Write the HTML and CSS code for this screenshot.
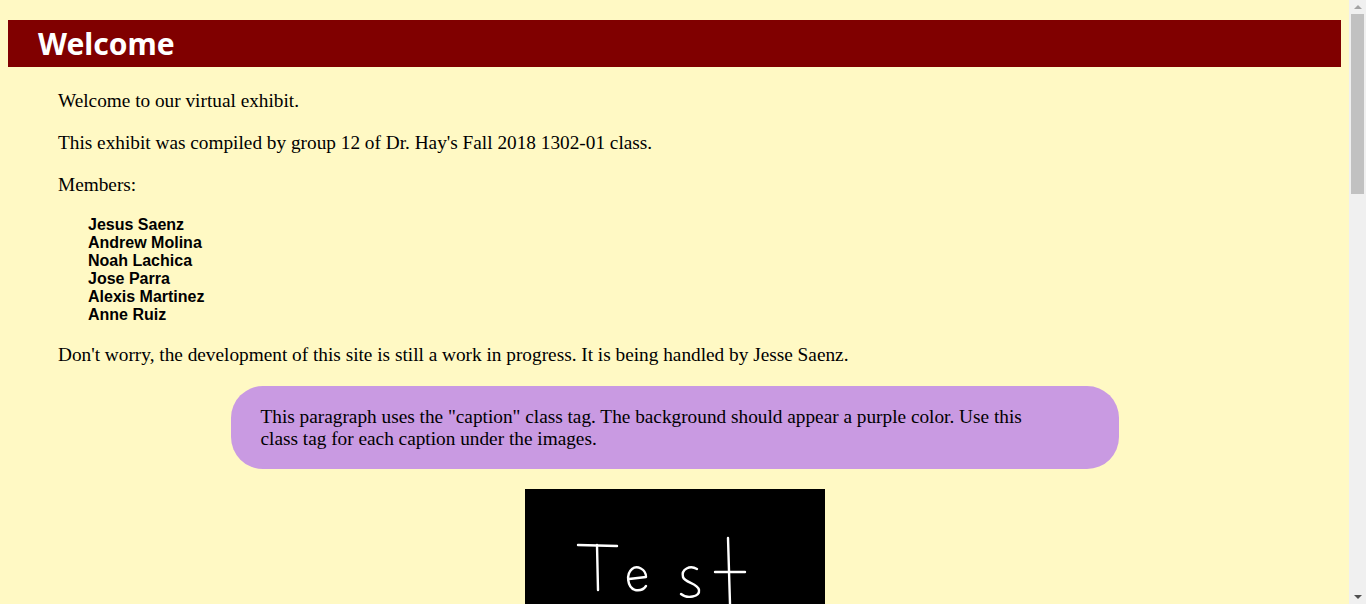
FILE: index.html
```html
<!DOCTYPE html>
<html lang="en">
<head>
<meta charset="utf-8">
<title>Welcome</title>
<link rel="stylesheet" href="styles.css">
</head>
<body>
<h1 class="banner">Welcome</h1>
<main class="content">
  <p class="text">Welcome to our virtual exhibit.</p>
  <p class="text">This exhibit was compiled by group 12 of Dr. Hay's Fall 2018 1302-01 class.</p>
  <p class="text">Members:</p>
  <ul class="members">
    <li>Jesus Saenz</li>
    <li>Andrew Molina</li>
    <li>Noah Lachica</li>
    <li>Jose Parra</li>
    <li>Alexis Martinez</li>
    <li>Anne Ruiz</li>
  </ul>
  <p class="text">Don't worry, the development of this site is still a work in progress. It is being handled by Jesse Saenz.</p>
  <p class="caption">This paragraph uses the "caption" class tag. The background should appear a purple color. Use this class tag for each caption under the images.</p>
  <div class="figure">
    <svg class="test-img" width="300" height="300" viewBox="0 0 300 300" aria-label="Test">
      <rect width="300" height="300" fill="#000"/>
      <g fill="none" stroke="#fff" stroke-width="2.4" stroke-linecap="round" stroke-linejoin="round">
        <path d="M53,56 L92,57"/>
        <path d="M72,56 L73,101"/>
        <path d="M104,90 L121,88 C121,80 112,76 107,80 C101,85 102,98 110,101 C115,102 119,100 121,97"/>
        <path d="M172,80 C165,76 156,80 158,88 C160,94 173,94 174,101 C175,108 162,110 156,105"/>
        <path d="M203,49 L205,115"/>
        <path d="M190,83 L220,83"/>
      </g>
    </svg>
  </div>
</main>
<div class="scrollbar" aria-hidden="true">
  <span class="arrow arrow-up"></span>
  <span class="thumb"></span>
  <span class="track-rest"></span>
  <span class="arrow arrow-down"></span>
</div>
</body>
</html>
```

FILE: styles.css
```css
html {
  background: #fff9c4;
}
body {
  margin: 0;
  padding: 8px 25px 8px 8px;
  background: #fff9c4;
  color: #000;
}
.banner {
  margin: 12px 0 0;
  padding: 0 30px;
  height: 47px;
  line-height: 47px;
  background: #800000;
  color: #fff;
  font-family: "Noto Sans", sans-serif;
  font-weight: 700;
  font-size: 30px;
}
.content {
  padding: 3px 50px 1310px;
}
.text {
  margin: 20px 0;
  font-family: "Liberation Serif", serif;
  font-size: 19.3px;
  line-height: 22px;
}
.members {
  list-style: none;
  margin: 20px 0;
  padding: 0 0 0 30px;
  font-family: "Liberation Sans", Arial, sans-serif;
  font-weight: 700;
  font-size: 16px;
  line-height: 18px;
}
.caption {
  width: 888px;
  box-sizing: border-box;
  margin: 20px auto;
  padding: 20px 60px 19px 30px;
  border-radius: 32px;
  background: #c99ae2;
  font-family: "Liberation Serif", serif;
  font-size: 19.3px;
  line-height: 22px;
}
.figure {
  display: flex;
  justify-content: center;
}
.test-img {
  display: block;
}

/* imitation of the browser's classic scrollbar */
.scrollbar {
  position: fixed;
  top: 0;
  right: 0;
  bottom: 0;
  width: 17px;
  background: #f0f0f0;
  display: flex;
  flex-direction: column;
  align-items: center;
}
.arrow {
  flex: none;
  width: 0;
  height: 0;
  border-left: 4px solid transparent;
  border-right: 4px solid transparent;
}
.arrow-up {
  margin: 5px 0 5px;
  border-bottom: 4px solid #a3a3a3;
}
.arrow-down {
  margin: 5px 0 5px;
  border-top: 4px solid #505050;
}
.thumb {
  flex: none;
  width: 13px;
  height: 180px;
  background: #c1c1c1;
}
.track-rest {
  flex: 1;
}
```
